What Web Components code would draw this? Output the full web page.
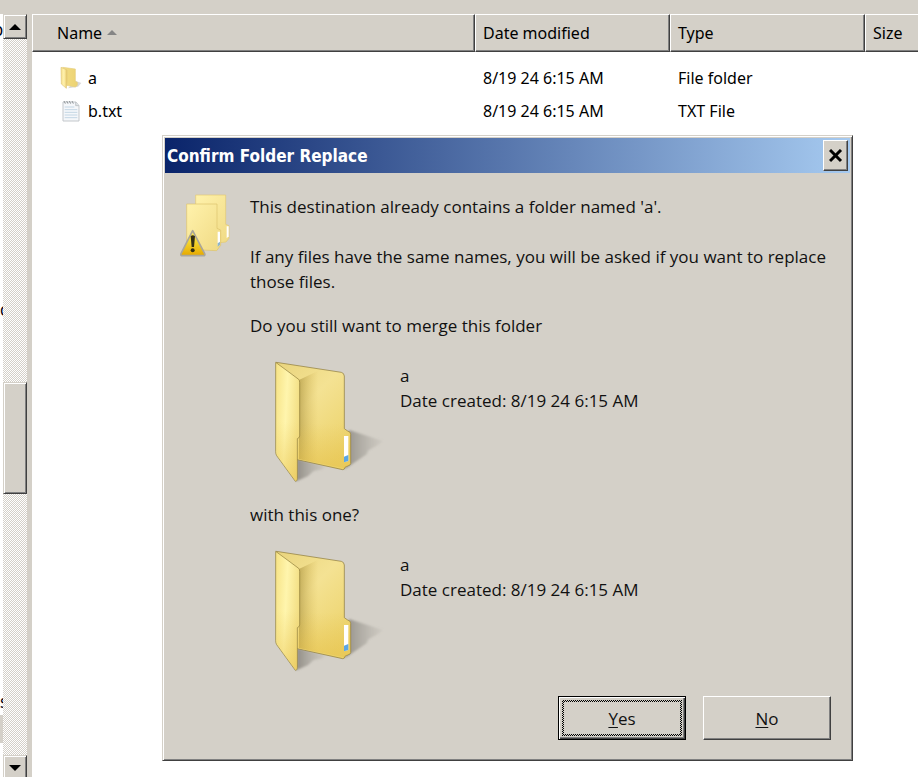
<!DOCTYPE html>
<html lang="en">
<head>
<meta charset="utf-8">
<title>Confirm Folder Replace</title>
<style>
html, body { height: 100%; margin: 0; }
body {
  --face: #d4d0c8; --hi: #fff; --shade: #808080; --dark: #404040;
  --ui: "Noto Sans", sans-serif;
  --title: "DejaVu Sans Condensed", "Noto Sans", sans-serif;
  --text: "Open Sans", "Noto Sans", sans-serif;
  background: var(--face); color: #000; overflow: hidden;
}
</style>
</head>
<body>
<explorer-window></explorer-window>

<template id="t-explorer">
<style>
:host { display: flex; height: 100%; box-sizing: border-box; padding-top: 14px; position: relative; font: 16px/20px var(--ui); }
file-list { flex: 1; min-width: 0; margin-left: 5px; }
confirm-dialog { position: absolute; left: 162px; top: 135px; width: min(691px, calc(100% - 162px)); }
</style>
<nav-sliver></nav-sliver>
<classic-scrollbar></classic-scrollbar>
<file-list></file-list>
<confirm-dialog heading="Confirm Folder Replace">
  <confirm-message></confirm-message>
  <push-button slot="actions" default key="Y">es</push-button>
  <push-button slot="actions" key="N">o</push-button>
</confirm-dialog>
</template>

<template id="t-nav">
<style>
:host { display: grid; grid-template: 280px 392px 1fr / 100%; width: 3px; background: #fff; overflow: hidden; color: #001; font: 17px/20px var(--title); }
span { display: flex; padding-top: 6px; }
.end { justify-content: flex-end; }
.last { flex-direction: column; align-items: flex-start; }
.last::after { content: ""; width: 3px; height: 28px; margin-top: 3px; background: var(--face); }
</style>
<span class="end">o</span><span>c</span><span class="last">s</span>
</template>

<template id="t-scroll">
<style>
:host { display: grid; grid-template-rows: 25px 343fr 112px 261fr 22px; width: 24px; overflow: hidden;
  background: repeating-conic-gradient(#fff 0 25%, var(--face) 0 50%) 0 0 / 2px 2px; }
button, .thumb { display: grid; place-items: center; padding: 0; margin: 0; box-sizing: border-box; background: var(--face);
  border: 1px solid; border-color: var(--face) var(--dark) var(--dark) var(--face);
  box-shadow: inset 1px 1px var(--hi), inset -1px -1px var(--shade); }
svg { display: block; }
.thumb { grid-row: 3; }
.down { grid-row: 5; height: 25px; }
</style>
<button aria-label="Scroll up"><svg width="12" height="6"><path d="M6 0 12 6H0z"/></svg></button>
<div class="thumb"></div>
<button class="down" aria-label="Scroll down"><svg width="12" height="6"><path d="M0 0H12L6 6z"/></svg></button>
</template>

<template id="t-list">
<style>
:host { display: block; background: #fff; overflow: hidden; }
table { border-collapse: separate; border-spacing: 0; table-layout: fixed; width: calc(100% + 20px); min-width: 900px; }
th, td { text-align: left; font-weight: normal; white-space: nowrap; padding: 0 0 0 7px; }
th { height: 38px; box-sizing: border-box; background: var(--face); border: 1px solid; border-color: var(--hi) var(--dark) var(--dark) var(--hi);
  box-shadow: inset -1px -1px var(--shade); }
th:first-child { padding-left: 24px; }
th svg { margin-left: 5px; vertical-align: 4px; }
tbody::before { content: ""; display: block; height: 9px; }
td { height: 33px; padding-left: 8px; }
td:first-child { padding-left: 28px; }
.file { display: flex; align-items: center; gap: 6px; }
</style>
<table>
<colgroup><col style="width:443px"><col style="width:195px"><col style="width:195px"><col></colgroup>
<thead><tr><th scope="col">Name<svg width="10" height="5"><path d="M5 0 10 5H0z" fill="#858585"/></svg></th><th scope="col">Date modified</th><th scope="col">Type</th><th scope="col">Size</th></tr></thead>
<tbody>
<tr><td><span class="file"><small-icon kind="folder"></small-icon>a</span></td><td>8/19 24 6:15 AM</td><td>File folder</td><td></td></tr>
<tr><td><span class="file"><small-icon kind="text"></small-icon>b.txt</span></td><td>8/19 24 6:15 AM</td><td>TXT File</td><td></td></tr>
</tbody></table>
</template>

<template id="t-small">
<style>
:host { display: block; width: 22px; height: 24px; }
svg { display: none; }
:host([kind="folder"]) .folder, :host([kind="text"]) .text { display: block; }
</style>
<svg class="folder" width="22" height="24" viewBox="0 0 66 72">
<defs><linearGradient id="a"><stop stop-color="#f3dc83"/><stop offset="1" stop-color="#ecd373"/></linearGradient><linearGradient id="b"><stop stop-color="#f6e08b"/><stop offset=".5" stop-color="#fff1ae"/><stop offset="1" stop-color="#e5c662"/></linearGradient></defs>
<path d="M46 44 64 51 54 62 24 67z" fill="#c9c9c9" opacity=".7"/>
<path d="M8 4 46 9V46L52 49V58L46 63 20 58z" fill="url(#a)" stroke="#e6cf80" stroke-width="2"/>
<path d="M3 4 21 12 V46 L19 67 4 54z" fill="url(#b)" stroke="#dfc67a" stroke-width="2"/>
</svg>
<svg class="text" width="22" height="24" viewBox="0 0 66 72">
<path d="M9 9H48L57 20V66H9z" fill="#f5f7fa" stroke="#c3c7cb" stroke-width="3"/>
<path d="M47 9V20H57" fill="#dfe3e6" stroke="#aeb4b8" stroke-width="2"/>
<path d="M14 24H43M14 32H52M14 40H52M14 48H52M14 56H52" stroke="#c3d6e4" stroke-width="3"/>
<path d="M12 6 16 14M20 6 24 14M28 6 32 14M36 6 40 14" stroke="#909699" stroke-width="3"/>
</svg>
</template>

<template id="t-dialog">
<style>
:host { display: block; box-sizing: border-box; background: var(--face); border: 1px solid; border-color: var(--face) var(--dark) var(--dark) var(--face);
  box-shadow: inset 1px 1px var(--hi), inset -1px -1px var(--shade); padding: 2px; }
header { display: flex; align-items: center; justify-content: space-between; height: 35px; padding: 0 2px; color: #fff;
  background: linear-gradient(90deg, #0a246a, #a6caf0); }
h1 { margin: 0; font: bold 17px/20px var(--title); }
button { width: 25px; height: 31px; padding: 0; display: grid; place-items: center; background: var(--face); border: 1px solid;
  border-color: var(--hi) var(--dark) var(--dark) var(--hi); box-shadow: inset -1px -1px var(--shade); }
footer { display: flex; justify-content: flex-end; gap: 17px; padding: 5px 19px 18px; }
</style>
<header><h1></h1><button aria-label="Close"><svg width="14" height="14" viewBox="0 0 14 14"><path d="M1 1 12 12M12 1 1 12" stroke="#000" stroke-width="3"/></svg></button></header>
<slot></slot>
<footer><slot name="actions"></slot></footer>
</template>

<template id="t-message">
<style>
:host { display: grid; grid-template-columns: 52px 1fr; gap: 18px; padding: 21px 19px 0 15px; font: 17px/25px var(--text); color: #111; }
p { margin: 0; }
.gap { margin-top: 25px; }
.ask { margin-top: 19px; }
</style>
<svg width="52" height="66" viewBox="60 189 156 198">
<defs><linearGradient id="f" x2="1" y2="1"><stop stop-color="#fff2ac"/><stop offset="1" stop-color="#f0da84"/></linearGradient>
<linearGradient id="w" x2="0" y2="1"><stop stop-color="#ffed62"/><stop offset=".5" stop-color="#f3d22b"/><stop offset="1" stop-color="#e6a800"/></linearGradient></defs>
<path d="M107 192H197V280L207 284V322L198 333 180 335H107z" fill="url(#f)" stroke="#e2c872" stroke-width="2"/>
<path d="M200 286H206V316L200 322z" fill="#fff"/>
<path d="M80 219H171V292L182 297V343L170 359 80 355z" fill="url(#f)" stroke="#dcc26c" stroke-width="2"/>
<path d="M173 302H180V336L173 344z" fill="#fff"/><path d="M173 337 180 332V341L173 347z" fill="#8db5ce"/>
<path d="M98 299 134 368Q136 374 130 374H67Q61 374 63 368z" fill="url(#w)" stroke="#aaa69a" stroke-width="5" stroke-linejoin="round"/>
<path d="M92 316Q98 310 105 316L102 348H95z" fill="#343016"/><circle cx="98" cy="358" r="6" fill="#343016"/>
</svg>
<div>
<p>This destination already contains a folder named 'a'.</p>
<p class="gap">If any files have the same names, you will be asked if you want to replace those files.</p>
<p class="ask">Do you still want to merge this folder</p>
<folder-card><span>a</span><span>Date created: 8/19 24 6:15 AM</span></folder-card>
<p>with this one?</p>
<folder-card><span>a</span><span>Date created: 8/19 24 6:15 AM</span></folder-card>
</div>
</template>

<template id="t-card">
<style>
:host { display: flex; height: 164px; box-sizing: border-box; padding: 12px 0 0 5px; }
.info { display: flex; flex-direction: column; padding-top: 13px; margin-left: -5px; }
svg { flex: none; }
</style>
<svg width="150" height="150" viewBox="0 0 450 450">
<defs>
<linearGradient id="back" x1="0" y1="0" x2=".7" y2="1"><stop stop-color="#e9d47d"/><stop offset=".45" stop-color="#f4e293"/><stop offset="1" stop-color="#ecd269"/></linearGradient>
<linearGradient id="fold"><stop stop-color="#9e8633" stop-opacity=".55"/><stop offset="1" stop-color="#d4b34b" stop-opacity="0"/></linearGradient>
<linearGradient id="front" x2="1" y2=".25"><stop stop-color="#f6e284"/><stop offset=".5" stop-color="#fff5ad"/><stop offset="1" stop-color="#f3df85"/></linearGradient>
<linearGradient id="low" x2="0" y2="1"><stop offset=".5" stop-color="#e6c04a" stop-opacity="0"/><stop offset="1" stop-color="#e6c04a" stop-opacity=".5"/></linearGradient>
<linearGradient id="s"><stop stop-color="#6d6a64" stop-opacity=".65"/><stop offset="1" stop-color="#99958c" stop-opacity=".1"/></linearGradient>
<filter id="soft"><feGaussianBlur stdDeviation="3"/></filter>
</defs>
<g fill="url(#s)" filter="url(#soft)"><path d="M282 240 384 273 366 287 340 301 335 313 282 349 268 357z"/><path d="M125 327 216 348 198 359 176 363 158 379 124 394z"/></g>
<path d="M64 37 259 67Q267 69 268 78V236L278 243Q287 245 287 253V341Q286 346 280 347L270 351Q270 359 263 359L122 328z" fill="url(#back)" stroke="#887638" stroke-width="2"/>
<path d="M132 90 190 62V340L132 327z" fill="url(#fold)"/>
<path d="M127 85 268 85V236L286 248V341L268 355 127 327z" fill="url(#low)"/>
<path d="M267 258H280V333L267 337z" fill="#fff"/><path d="M267 320 280 315V333L267 337z" fill="#5ba6e5"/>
<path d="M62 37 131 88Q134 91 134 98V258Q133 264 127 266V385Q127 395 121 394L65 317Q62 312 62 305z" fill="url(#front)" stroke="#8b7836" stroke-width="2"/>
<path d="M63 39 132 91V260L126 266V390L121 392 65 315z" fill="url(#low)"/>
</svg>
<div class="info"><slot></slot></div>
</template>

<template id="t-button">
<style>
:host { display: block; }
button { display: grid; width: 128px; height: 44px; padding: 2px; font: 17px/25px var(--text); color: #111; background: var(--face);
  border: 1px solid; border-color: var(--hi) var(--dark) var(--dark) var(--hi); box-shadow: inset -1px -1px var(--shade); outline: 0; }
.ring, .label { display: grid; place-items: center; }
.label { width: 100%; height: 100%; background: var(--face); }
:host([default]) button { border-color: #000; box-shadow: inset 1px 1px var(--hi), inset -1px -1px var(--dark), inset -2px -2px var(--shade); padding: 3px; }
:host([default]) .ring { padding: 2px; background: repeating-conic-gradient(#000 0 25%, var(--face) 0 50%) 0 0 / 2px 2px; }
u { text-underline-offset: 2px; text-decoration-thickness: 1px; }
</style>
<button><span class="ring"><span class="label"><span><u></u><slot></slot></span></span></span></button>
</template>

<script>
function define(name, templateId, setup) {
  customElements.define(name, class extends HTMLElement {
    constructor() {
      super();
      this.attachShadow({ mode: "open" }).append(document.getElementById(templateId).content.cloneNode(true));
    }
    connectedCallback() { if (setup) setup(this, this.shadowRoot); }
  });
}
define("nav-sliver", "t-nav");
define("classic-scrollbar", "t-scroll");
define("small-icon", "t-small");
define("file-list", "t-list");
define("folder-card", "t-card");
define("confirm-message", "t-message");
define("push-button", "t-button", (el, root) => { root.querySelector("u").textContent = el.getAttribute("key"); });
define("confirm-dialog", "t-dialog", (el, root) => {
  el.setAttribute("role", "dialog");
  root.querySelector("h1").textContent = el.getAttribute("heading");
});
define("explorer-window", "t-explorer");
</script>
</body>
</html>
